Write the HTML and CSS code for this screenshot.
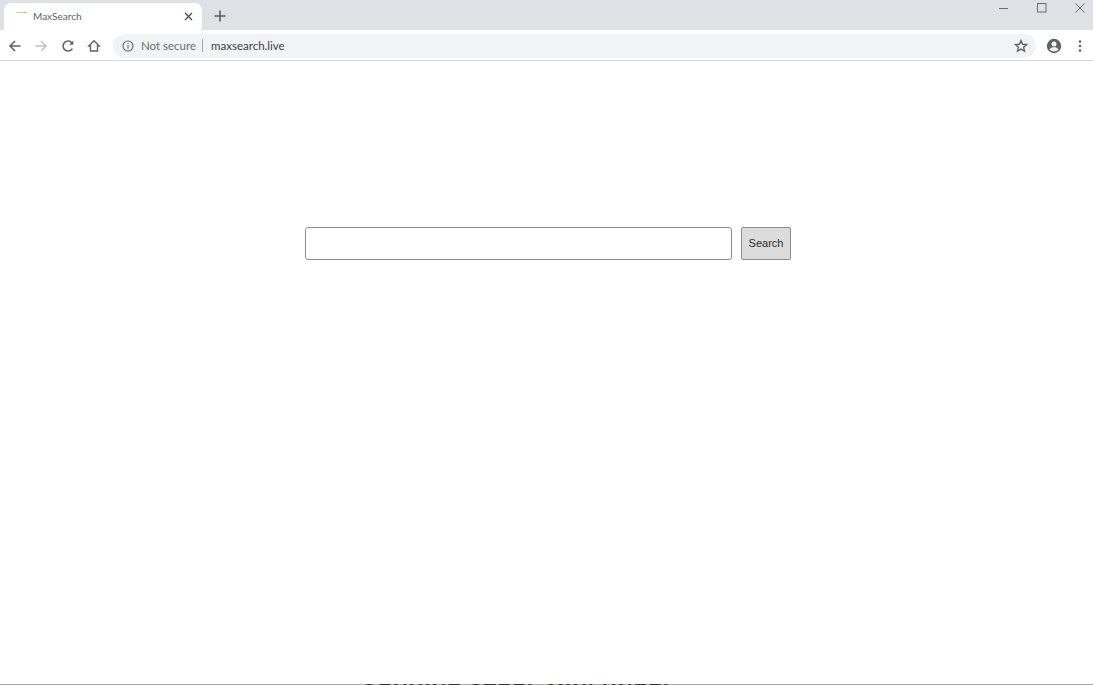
FILE: index.html
```html
<!DOCTYPE html>
<html lang="en">
<head>
<meta charset="utf-8">
<title>MaxSearch</title>
<link rel="stylesheet" href="styles.css">
</head>
<body>
<div class="window">
  <header class="tabstrip">
    <div class="tab">
      <span class="favicon"></span>
      <span class="tab-title">MaxSearch</span>
      <svg class="tab-close" width="9" height="9" viewBox="0 0 9 9"><path d="M1 1l7 7M8 1L1 8" stroke="#4a4d51" stroke-width="1.3" fill="none"/></svg>
    </div>
    <svg class="new-tab" width="12" height="12" viewBox="0 0 12 12"><path d="M6 .5v11M.5 6h11" stroke="#5a5d61" stroke-width="1.6" fill="none"/></svg>
    <div class="window-controls">
      <svg width="10" height="10" viewBox="0 0 10 10"><path d="M0 5.500h9" stroke="#6a6d71" stroke-width="1" fill="none"/></svg>
      <svg width="10" height="10" viewBox="0 0 10 10"><rect x=".5" y=".5" width="8.500" height="8.500" stroke="#6a6d71" fill="none"/></svg>
      <svg width="10" height="10" viewBox="0 0 10 10"><path d="M.5.5l9 9M9.500.5l-9 9" stroke="#6a6d71" fill="none"/></svg>
    </div>
  </header>
  <nav class="toolbar">
    <svg class="nav-icon" width="16" height="16" viewBox="0 0 16 16"><path d="M13.500 8H3M8 3L3 8l5 5" stroke="#5f6368" stroke-width="1.500" fill="none"/></svg>
    <svg class="nav-icon" width="16" height="16" viewBox="0 0 16 16"><path d="M2.500 8H13M8 3l5 5-5 5" stroke="#c0c3c6" stroke-width="1.500" fill="none"/></svg>
    <svg class="nav-icon" width="16" height="16" viewBox="0 0 16 16"><path d="M12.400 10.600A5 5 0 1 1 12.200 5.200" stroke="#5f6368" stroke-width="1.500" fill="none"/><path d="M13.300 2.500v4.200H9.100z" fill="#5f6368"/></svg>
    <svg class="nav-icon" width="16" height="16" viewBox="0 0 16 16"><path d="M8 2.800L2.800 8h1.700v5h7V8h1.700z" stroke="#5f6368" stroke-width="1.400" fill="none"/></svg>
    <div class="omnibox">
      <svg class="info-icon" width="12" height="12" viewBox="0 0 12 12"><circle cx="6" cy="6" r="5" stroke="#5f6368" stroke-width="1.100" fill="none"/><path d="M6 5.200v3.600M6 3.200v1.100" stroke="#5f6368" stroke-width="1.100" fill="none"/></svg>
      <span class="not-secure">Not secure</span>
      <span class="divider"></span>
      <span class="url">maxsearch.live</span>
      <svg class="star" width="14" height="14" viewBox="0 0 14 14"><path d="M7 1.600l1.600 3.700 4 .35-3 2.650.9 3.900L7 10.150 3.500 12.200l.9-3.900-3-2.650 4-.35z" stroke="#5f6368" stroke-width="1.400" fill="none"/></svg>
    </div>
    <svg class="avatar" width="16" height="16" viewBox="0 0 16 16"><circle cx="8" cy="8" r="7.200" fill="#5f6368"/><circle cx="8" cy="6" r="2.500" fill="#f1f3f4"/><path d="M3.400 11.400C4.500 9.700 6.200 9.200 8 9.200s3.500.5 4.600 2.200A5.900 5.900 0 0 1 8 13.500a5.900 5.900 0 0 1-4.600-2.100z" fill="#f1f3f4"/></svg>
    <svg class="menu" width="4" height="14" viewBox="0 0 4 14"><circle cx="2" cy="2.500" r="1.300" fill="#5f6368"/><circle cx="2" cy="7" r="1.300" fill="#5f6368"/><circle cx="2" cy="11.500" r="1.300" fill="#5f6368"/></svg>
  </nav>
  <main class="page">
    <form class="search-form">
      <input class="search-input" type="text" aria-label="Search">
      <button class="search-button" type="button">Search</button>
    </form>
  </main>
  <footer class="cutoff">
    <div class="cutoff-text">GENUINE STEEL MINI KNEEL</div>
  </footer>
</div>
</body>
</html>
```
FILE: styles.css
```css
* { box-sizing: border-box; }
html, body { margin: 0; height: 100%; overflow: hidden; background: #fff; }
.window {
  width: 1093px;
  height: 685px;
  display: flex;
  flex-direction: column;
  font-family: Lato, "Open Sans", sans-serif;
}
.tabstrip {
  height: 30px;
  flex: none;
  background: #dee1e6;
  display: flex;
  align-items: flex-start;
  padding: 3px 8px 0 4px;
}
.tab {
  width: 198px;
  height: 27px;
  background: #fff;
  border-radius: 7px 7px 0 0;
  display: flex;
  align-items: center;
  padding: 0 9px 1px 12px;
}
.favicon {
  width: 11px;
  height: 1px;
  background: linear-gradient(90deg, #e0d6c6, #c9b08a);
  margin: 0 6px 7px 0;
  flex: none;
}
.tab-title { font-size: 10px; color: #5f6266; flex: 1; }
.tab-close { flex: none; }
.new-tab { margin: 7px 0 0 12px; flex: none; }
.window-controls {
  margin-left: auto;
  display: flex;
  gap: 28px;
}
.toolbar {
  height: 31px;
  flex: none;
  background: #fff;
  border-bottom: 1px solid #d4d6d9;
  display: flex;
  align-items: center;
  padding: 1px 11px 0 7px;
}
.nav-icon { flex: none; margin-right: 10.300px; }
.omnibox {
  flex: 1;
  height: 24px;
  margin: 0 10px 0 .8px;
  background: #f1f3f4;
  border-radius: 12px;
  display: flex;
  align-items: center;
  padding: 0 8px 0 9px;
  font-size: 11.500px;
}
.info-icon { flex: none; margin-right: 7px; }
.not-secure { color: #6a6d71; }
.divider { width: 1px; height: 13px; background: #a0a3a7; margin: 0 8px 0 6px; }
.url { color: #3c4043; flex: 1; }
.star { flex: none; }
.avatar { flex: none; margin-right: 16px; }
.menu { flex: none; }
.page {
  flex: 1;
  display: flex;
  justify-content: center;
  align-items: flex-start;
  padding: 166px 0 0 3px;
}
.search-form { display: flex; gap: 9px; }
.search-input {
  width: 427px;
  height: 33px;
  border: 1px solid #8c8c8c;
  border-radius: 3px;
  background: #fff;
  outline: none;
}
.search-button {
  width: 50px;
  height: 33px;
  border: 1px solid #8c8c8c;
  border-radius: 2px;
  background: #dcdcdc;
  color: #2a2a2a;
  font: 11px "Liberation Sans", Arial, sans-serif;
  padding: 0 0 2px;
}
.cutoff {
  height: 1px;
  flex: none;
  background: #a8a8a8;
  overflow: hidden;
  text-align: center;
  padding-right: 55px;
}
.cutoff-text {
  font: 700 20px/20px "Liberation Sans", Arial, sans-serif;
  letter-spacing: 1.400px;
  color: #333;
  margin-top: -3px;
}
```
